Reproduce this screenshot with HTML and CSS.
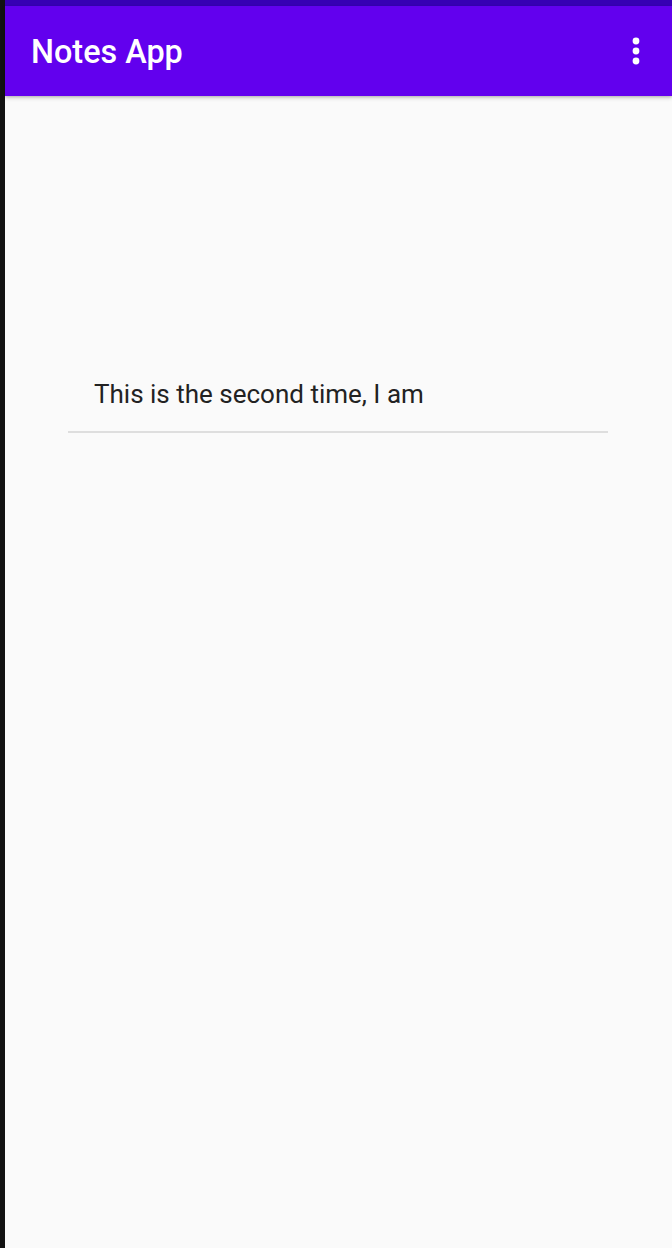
FILE: index.html
```html
<!DOCTYPE html>
<html>
<head>
<meta charset="utf-8">
<link rel="stylesheet" href="styles.css">
</head>
<body>
<div class="frame">
  <div class="edge"></div>
  <div class="screen">
    <div class="status"></div>
    <header class="appbar">
      <h1 class="title">Notes App</h1>
      <button class="menu" aria-label="More options">
        <svg width="8" height="28" viewBox="0 0 8 28"><circle cx="4" cy="4" r="3.4" fill="#fff"/><circle cx="4" cy="14" r="3.4" fill="#fff"/><circle cx="4" cy="24" r="3.4" fill="#fff"/></svg>
      </button>
    </header>
    <main class="content">
      <div class="note">
        <p class="note-text">This is the second time, I am</p>
      </div>
    </main>
  </div>
</div>
</body>
</html>
```
FILE: styles.css
```css
* { box-sizing: border-box; }
html, body { margin: 0; padding: 0; height: 100%; }
body { font-family: Roboto, "Noto Sans", sans-serif; background: #fafafa; }
.frame { display: flex; height: 1248px; }
.edge { width: 5px; background: #121212; flex: none; }
.screen { flex: 1; display: flex; flex-direction: column; background: #fafafa; }
.status { height: 6px; background: #3700b3; }
.appbar {
  height: 90px;
  background: #6200ee;
  display: flex;
  align-items: center;
  justify-content: space-between;
  padding: 0 32px 0 26px;
  box-shadow: 0 2px 4px rgba(0,0,0,0.18), 0 1px 2px rgba(0,0,0,0.12);
  position: relative;
  z-index: 1;
}
.title { margin: 0; padding-top: 2px; color: #fff; font-weight: 500; font-size: 32.4px; line-height: 38px; }
.menu { background: none; border: 0; padding: 0; display: flex; }
.content { flex: 1; padding: 273px 0 0 63px; }
.note { width: 540px; border-bottom: 2px solid #dedede; padding: 10px 0 22px 26px; }
.note-text { margin: 0; font-size: 26px; color: #222; line-height: 30px; }
```
